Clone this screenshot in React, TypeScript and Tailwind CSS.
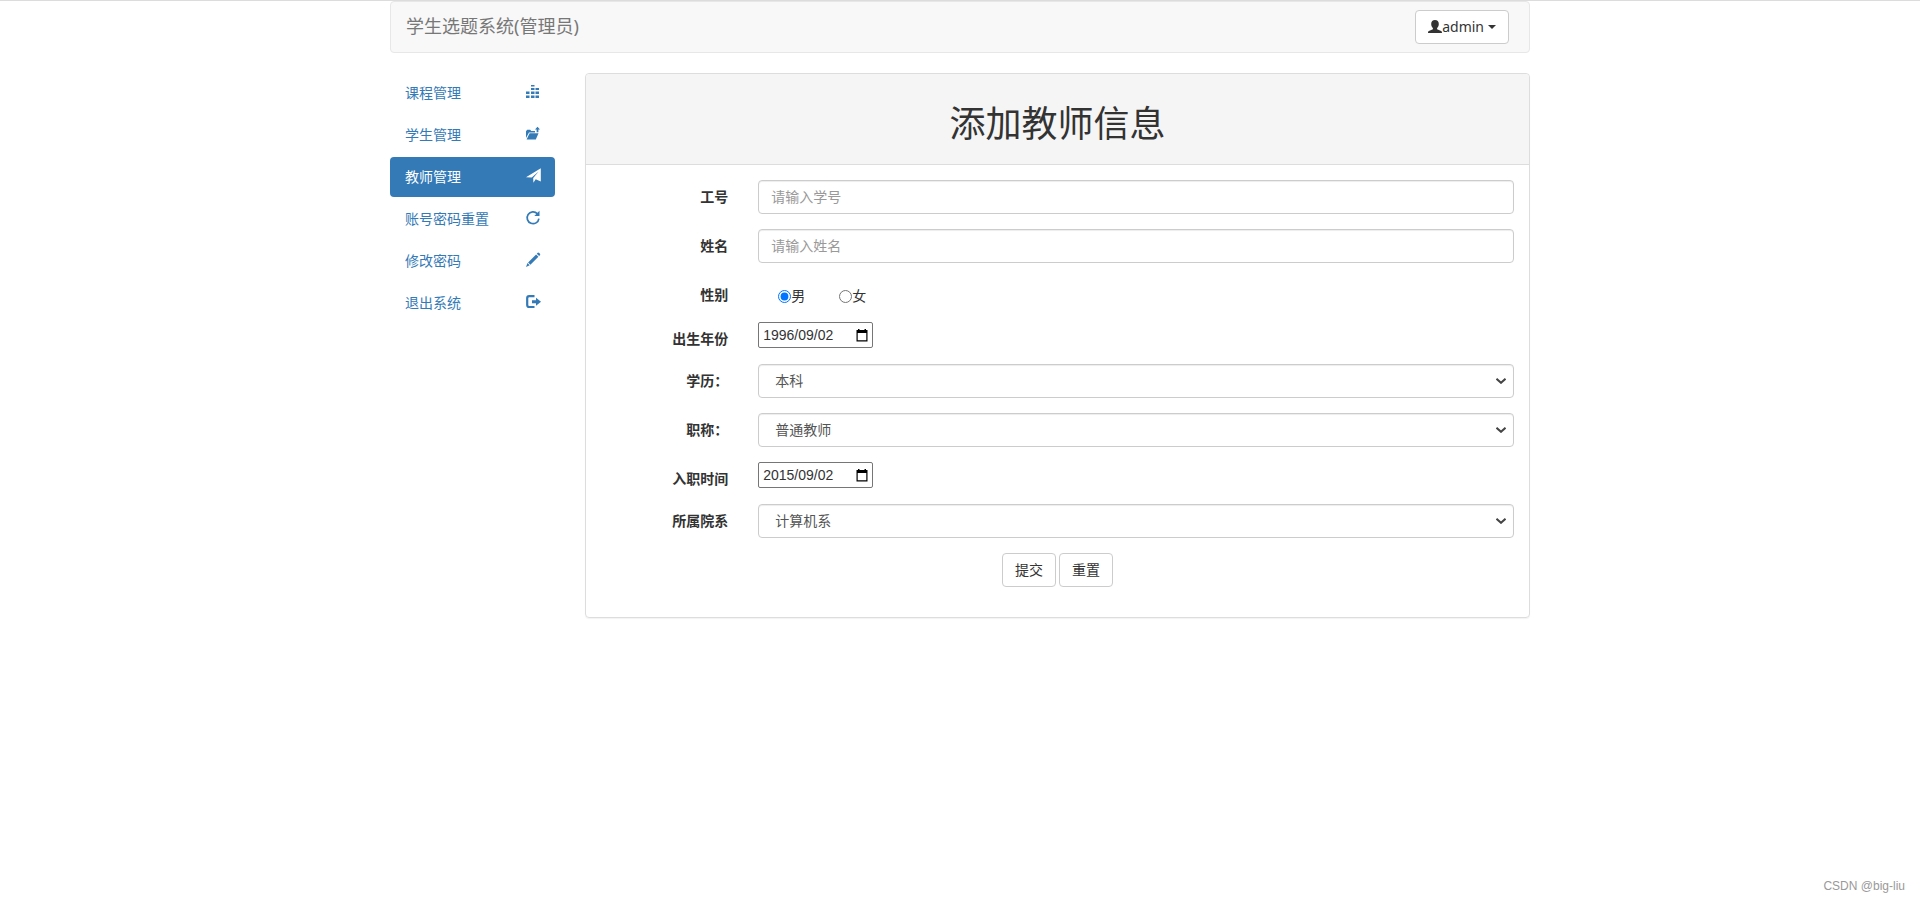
import type { ReactNode } from "react";

type IconName = "equalizer" | "folder" | "send" | "repeat" | "pencil" | "logout" | "user";

const icons: Record<IconName, ReactNode> = {
  equalizer: (
    <path d="M5 0h3.500v1.500H5zM5 3h3.500v2H5zM9.500 3h3.500v2H9.500zM0 6.500h3.500v2.500H0zM5 6.500h3.500v2.500H5zM9.500 6.500h3.500v2.500H9.500zM0 10.500h3.500V13H0zM5 10.500h3.500V13H5zM9.500 10.500h3.500V13H9.500z" />
  ),
  folder: (
    <>
      <path d="M0 11V4.200L1.200 2.800h3l1 1.200H9v1.500H3z" />
      <path d="M3.600 6.300h8.900L9.800 12.500H.6z" />
      <path d="M11.500-.2 14 2.500h-1.600v2.700h-1.800V2.500H9z" />
    </>
  ),
  send: <path d="M14.800-.8v13.300L9.700 10.300l-2.300 3.400-.2-4.700 5.500-6.500-7 6L0 8.200z" />,
  repeat: (
    <>
      <path d="M11.300 2.700A5.900 5.900 0 1 0 12.900 7.600" fill="none" stroke="currentColor" strokeWidth="1.700" />
      <path d="M13.500-.2v5.200H8.300z" />
    </>
  ),
  pencil: (
    <path d="M12-.4c1 0 2.400 1.300 2.200 2.300l-1.100 1.100-2.300-2.300zM10.100 1.400l2.300 2.300-8 8-2.300-2.300zM1.500 10.100l2.200 2.200L0 14z" />
  ),
  logout: (
    <>
      <path d="M8.500 1.200H3.200Q1.200 1.200 1.200 3.200v6.800q0 2 2 2h5.300" fill="none" stroke="currentColor" strokeWidth="2.200" />
      <path d="M6 5.200h4V2.700l5 4-5 4V8.200H6z" />
    </>
  ),
  user: (
    <path d="M7 0c2.400 0 3.800 1.600 3.800 3.900 0 1.700-.6 3.100-1.700 4.100v1.300l4 1.700c.7.300.9.900.9 2H0c0-1.100.2-1.700.9-2l4-1.700V8C3.800 7 3.200 5.600 3.200 3.900 3.200 1.600 4.600 0 7 0z" />
  ),
};

function Icon({ name }: { name: IconName }) {
  return (
    <svg viewBox="0 0 14 14" className="size-3.5 shrink-0 overflow-visible" fill="currentColor" aria-hidden="true">
      {icons[name]}
    </svg>
  );
}

const menu: { label: string; icon: IconName; active?: boolean }[] = [
  { label: "课程管理", icon: "equalizer" },
  { label: "学生管理", icon: "folder" },
  { label: "教师管理", icon: "send", active: true },
  { label: "账号密码重置", icon: "repeat" },
  { label: "修改密码", icon: "pencil" },
  { label: "退出系统", icon: "logout" },
];

const control =
  "block h-[34px] w-full rounded border border-[#ccc] bg-white text-[#555] shadow-[inset_0_1px_1px_rgba(0,0,0,0.075)]";
const button = "h-[34px] rounded border border-[#ccc] bg-white px-3 text-[#333] hover:bg-[#e6e6e6]";

function Row({ id, label, children }: { id: string; label: string; children: ReactNode }) {
  return (
    <div className="mb-[15px] flex items-start">
      <label htmlFor={id} className="w-1/6 shrink-0 pt-[7px] pr-[15px] text-right font-bold">
        {label}
      </label>
      <div className="min-w-0 flex-1 px-[15px]">{children}</div>
    </div>
  );
}

function TextField({ id, placeholder }: { id: string; placeholder: string }) {
  return (
    <input id={id} type="text" placeholder={placeholder} className={`${control} px-3 pb-0.5 placeholder:text-[#999]`} />
  );
}

function DateField({ id, value }: { id: string; value: string }) {
  return (
    <div className="mb-px flex h-[26px] w-[115px] items-center rounded-xs border border-[#767676] bg-white px-1">
      <input
        id={id}
        type="text"
        defaultValue={value}
        className="w-0 flex-1 bg-transparent font-['Liberation_Sans',sans-serif] outline-none"
      />
      <button type="button" aria-label="选择日期" className="text-black">
        <svg viewBox="0 0 12 13" className="h-[13px] w-3" fill="currentColor" aria-hidden="true">
          <path d="M2 0h1.500v1h5V0H10v1h1.500v11.500H.5V1H2zM1.700 4v7.300h8.600V4z" fillRule="evenodd" />
        </svg>
      </button>
    </div>
  );
}

function SelectField({ id, options }: { id: string; options: string[] }) {
  return (
    <div className="relative">
      <select id={id} className={`${control} appearance-none pr-8 pl-4`}>
        {options.map((option) => (
          <option key={option}>{option}</option>
        ))}
      </select>
      <svg
        viewBox="0 0 10 6"
        className="pointer-events-none absolute top-3.5 right-2 h-1.5 w-2.5"
        fill="none"
        stroke="#444"
        strokeWidth="2"
        aria-hidden="true"
      >
        <path d="m.5.8 4.500 4 4.500-4" />
      </svg>
    </div>
  );
}

export default function App() {
  return (
    <div className="flex min-h-screen flex-col border-t border-[#dcdcdc] bg-white font-['Noto_Sans','Noto_Sans_CJK_SC',sans-serif] text-sm text-[#333]">
      <div className="mx-auto w-full max-w-[1170px] flex-1 px-[15px]">
        <nav className="mb-5 flex h-[52px] items-center justify-between rounded border border-[#e7e7e7] bg-[#f8f8f8] pr-5 pl-[15px]">
          <a href="#" className="pb-0.5 text-lg leading-5 text-[#777]">
            学生选题系统(管理员)
          </a>
          <button type="button" className={`${button} flex items-center`}>
            <Icon name="user" />
            admin
            <span className="ml-1 border-x-4 border-t-4 border-x-transparent border-t-[#333]" />
          </button>
        </nav>

        <div className="flex items-start gap-[30px]">
          <ul className="flex w-[165px] shrink-0 flex-col gap-0.5">
            {menu.map((item) => (
              <li key={item.label}>
                <a
                  href="#"
                  className={`flex items-start justify-between rounded px-[15px] py-2.5 ${
                    item.active ? "bg-[#337ab7] text-white" : "text-[#337ab7] hover:bg-[#eee]"
                  }`}
                >
                  {item.label}
                  <span className="pt-0.5">
                    <Icon name={item.icon} />
                  </span>
                </a>
              </li>
            ))}
          </ul>

          <main className="min-w-0 flex-1 rounded border border-[#ddd] shadow-[0_1px_1px_rgba(0,0,0,0.05)]">
            <div className="rounded-t border-b border-[#ddd] bg-[#f5f5f5] px-[15px] pt-[30px] pb-5">
              <h1 className="text-center text-4xl leading-10">添加教师信息</h1>
            </div>

            <form className="pt-[15px] pb-[30px]" onSubmit={(e) => e.preventDefault()}>
              <Row id="number" label="工号">
                <TextField id="number" placeholder="请输入学号" />
              </Row>
              <Row id="name" label="姓名">
                <TextField id="name" placeholder="请输入姓名" />
              </Row>
              <Row id="male" label="性别">
                <div className="flex h-[29px] items-end gap-[34px] pb-px pl-5">
                  <label className="flex items-center">
                    <input id="male" type="radio" name="sex" defaultChecked className="size-[13px]" />男
                  </label>
                  <label className="flex items-center">
                    <input type="radio" name="sex" className="size-[13px]" />女
                  </label>
                </div>
              </Row>
              <Row id="birth" label="出生年份">
                <DateField id="birth" value="1996/09/02" />
              </Row>
              <Row id="degree" label="学历：">
                <SelectField id="degree" options={["本科", "硕士", "博士"]} />
              </Row>
              <Row id="title" label="职称：">
                <SelectField id="title" options={["普通教师", "副教授", "教授"]} />
              </Row>
              <Row id="entry" label="入职时间">
                <DateField id="entry" value="2015/09/02" />
              </Row>
              <Row id="department" label="所属院系">
                <SelectField id="department" options={["计算机系", "电子系", "数学系"]} />
              </Row>
              <div className="flex justify-center gap-[3px]">
                <button type="submit" className={button}>
                  提交
                </button>
                <button type="reset" className={button}>
                  重置
                </button>
              </div>
            </form>
          </main>
        </div>
      </div>

      <footer className="px-[15px] pb-2 text-right font-['Liberation_Sans',sans-serif] text-xs text-[#999]">
        CSDN @big-liu
      </footer>
    </div>
  );
}
